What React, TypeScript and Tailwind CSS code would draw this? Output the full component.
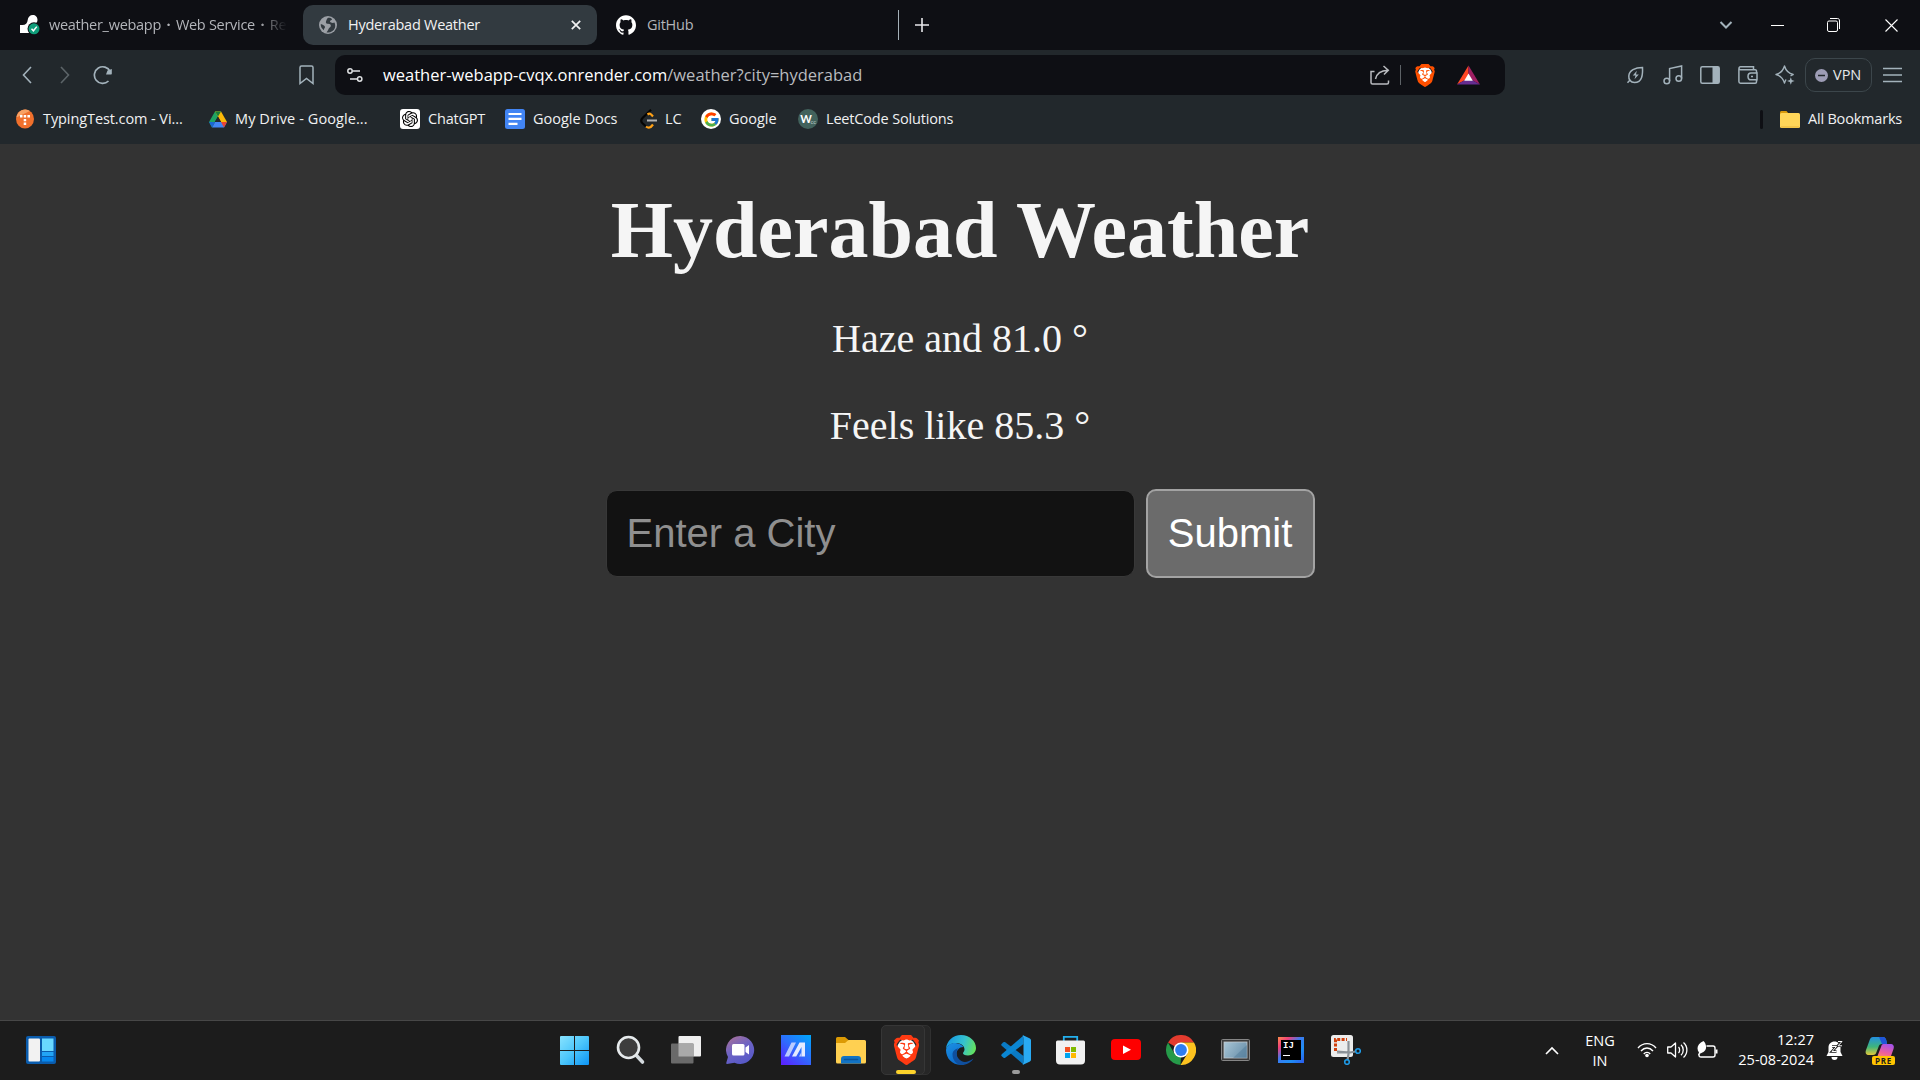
import type { ReactNode } from "react";
import { SiBrave, SiOpenai, SiGithub } from "react-icons/si";
import { FcGoogle } from "react-icons/fc";

function Svg({ w, h, vb, children, className }: { w: number; h: number; vb?: string; children: ReactNode; className?: string }) {
  return (
    <svg width={w} height={h} viewBox={vb ?? `0 0 ${w} ${h}`} fill="none" className={`block shrink-0 ${className ?? ""}`}>
      {children}
    </svg>
  );
}

/* ---------- Tab strip ---------- */

function RenderIcon() {
  return (
    <Svg w={20} h={20}>
      <path d="M0 18V10H2.500C5.500 10 7.500 8 7.700 5C8 2 10 0 12.800 0C15.500 0 17.500 2 17.500 5C17.500 7.500 15.500 9.200 13.500 9.500L9 12V18Z" fill="#fff" />
      <circle cx="14" cy="13.800" r="6.500" fill="#0e0f14" />
      <circle cx="14" cy="13.800" r="5.500" fill="#0f9d7a" />
      <path d="M11.500 13.800L13.400 15.800L16.800 11.600" stroke="#fff" strokeWidth="1.500" />
    </Svg>
  );
}

function GlobeIcon() {
  return (
    <Svg w={18} h={18}>
      <circle cx="9" cy="9" r="9" fill="#9b9fa5" />
      <path d="M9 1.800C7.500 3 7.500 4.500 7 5.500C6.500 7 7.500 7.800 9 7.800C11 7.800 12 8.500 11.800 10C11.500 11.500 10 11.800 9.500 13C9 14.200 8.500 15.500 7.500 16.200C10.500 17 14.500 15.500 15.900 12C16.500 10 16.200 8 15.500 6.500C14.500 7 13 7 12 6.500C10.500 6 10.800 4.500 12 4.200C12.800 4 13 3.500 13 3C12 2 10.500 1.600 9 1.800Z" fill="#323a40" />
      <path d="M1.800 8C3.500 8.500 6 9.500 6 11C6 12 5 12.500 4.800 14.200C2.800 12.500 1.500 10.500 1.800 8Z" fill="#323a40" />
    </Svg>
  );
}

function TabStrip() {
  return (
    <div className="flex h-[50px] items-center bg-[#0e0f14] text-[14.5px]">
      <div className="flex h-10 w-[303px] items-center pl-5">
        <RenderIcon />
        <span className="ml-[9px] w-[238px] overflow-hidden whitespace-nowrap tracking-[-0.28px] text-[#b3b5ba] [mask-image:linear-gradient(to_right,black_88%,transparent)]">
          weather_webapp <span className="mx-[2px] font-bold">·</span> Web Service <span className="mx-[2px] font-bold">·</span> Re
        </span>
      </div>
      <div className="flex h-10 w-[294px] items-center rounded-[10px] bg-[#323a40] pl-4 pr-4">
        <GlobeIcon />
        <span className="ml-[11px] flex-1 whitespace-nowrap tracking-[-0.25px] text-[#f1f1f2]">Hyderabad Weather</span>
        <Svg w={10} h={10}>
          <path d="M0.800 0.800L9.200 9.200M9.200 0.800L0.800 9.200" stroke="#f1f1f2" strokeWidth="1.700" />
        </Svg>
      </div>
      <div className="flex h-10 w-[300px] items-center pl-[19px]">
        <SiGithub className="size-5 text-white" />
        <span className="ml-[11px] tracking-[-0.25px] text-[#b3b5ba]">GitHub</span>
      </div>
      <div className="ml-px h-[30px] w-px bg-[#a5b0b8]" />
      <Svg w={14} h={14} className="ml-[16px]">
        <path d="M7 0V14M0 7H14" stroke="#e8e8ea" strokeWidth="1.600" />
      </Svg>
      <div className="ml-auto flex items-center pr-[22px] text-white">
        <Svg w={14} h={8}>
          <path d="M1.500 1L7 6.500L12.500 1" stroke="#a3b2bb" strokeWidth="2" />
        </Svg>
        <Svg w={13} h={13} className="ml-[38px]">
          <path d="M0 6.500H13" stroke="#fff" />
        </Svg>
        <Svg w={14} h={14} className="ml-[43px]">
          <rect x="0.500" y="3" width="10" height="10.500" rx="1.500" stroke="#fff" />
          <path d="M3 0.500H10.500C12 0.500 12.500 1.500 12.500 3V11" stroke="#fff" />
        </Svg>
        <Svg w={13} h={13} className="ml-[44px]">
          <path d="M0.500 0.500L12.500 12.500M12.500 0.500L0.500 12.500" stroke="#fff" strokeWidth="1.100" />
        </Svg>
      </div>
    </div>
  );
}

/* ---------- Address bar ---------- */

function BraveLion({ w, h, dark }: { w: number; h: number; dark?: boolean }) {
  return (
    <Svg w={w} h={h} vb="2 0 20 24">
      <ellipse cx="12" cy="11" rx="7.500" ry="8" fill="#fff" />
      <SiBrave size={24} className={dark ? "text-[#ff3a12]" : "text-[#ff5000]"} />
    </Svg>
  );
}

function BatTriangle() {
  return (
    <Svg w={23} h={20} vb="0 0 24 20">
      <path d="M12 0L0 20L12 13Z" fill="#ff4724" />
      <path d="M12 0L24 20L12 13Z" fill="#9e1f63" />
      <path d="M0 20H24L12 13Z" fill="#662d91" />
      <path d="M12 8.500L16.500 16H7.500Z" fill="#fff" />
    </Svg>
  );
}

function Toolbar() {
  return (
    <div className="flex h-[50px] items-center bg-[#22282c]">
      <div className="flex w-[335px] items-center pl-[22px]">
        <Svg w={10} h={18}>
          <path d="M9 1L1.500 9L9 17" stroke="#a3b2bb" strokeWidth="1.600" />
        </Svg>
        <Svg w={10} h={18} className="ml-7">
          <path d="M1 1L8.500 9L1 17" stroke="#5c6468" strokeWidth="1.600" />
        </Svg>
        <Svg w={20} h={20} className="ml-[23px]">
          <path d="M15.500 16A8.300 8.300 0 1 1 17.200 6.500" stroke="#a3b2bb" strokeWidth="1.700" />
          <path d="M13 9.600L14.500 5.500L18.800 4V8.600C18.800 9.300 18.500 9.600 17.800 9.600Z" fill="#a3b2bb" />
        </Svg>
        <Svg w={15} h={20} className="ml-[186px]">
          <path d="M1 2.500C1 1.500 1.500 1 2.500 1H12.500C13.500 1 14 1.500 14 2.500V18.500L7.500 13.500L1 18.500Z" stroke="#a3b2bb" strokeWidth="1.500" />
        </Svg>
      </div>
      <div className="flex h-10 w-[1170px] items-center rounded-[10px] bg-[#0e0f14] pl-3 pr-[25px]">
        <Svg w={16} h={16}>
          <circle cx="3" cy="4" r="2.200" stroke="#dfe1e3" strokeWidth="1.500" />
          <path d="M5.500 4H13M3 12H10" stroke="#dfe1e3" strokeWidth="1.500" />
          <circle cx="12.700" cy="12" r="2.200" stroke="#dfe1e3" strokeWidth="1.500" />
        </Svg>
        <span className="ml-5 whitespace-nowrap text-[16.5px] text-[#b9bbbf]">
          <span className="text-white">weather-webapp-cvqx.onrender.com</span>/weather?city=hyderabad
        </span>
        <div className="ml-auto flex items-center">
          <Svg w={20} h={20}>
            <path d="M4.500 6.500H1V17.500C1 18.500 1.500 19 2.500 19H17C18 19 18.500 18.500 18.500 17.500V15.500" stroke="#b9bbbf" strokeWidth="1.500" />
            <path d="M5.500 14C6.500 9 9.500 5.500 18 5.200M13.500 1L18.300 5.200L14 9.500" stroke="#b9bbbf" strokeWidth="1.500" />
          </Svg>
          <div className="ml-[10px] h-5 w-px bg-[#5d6266]" />
          <div className="ml-[14px]"><BraveLion w={20} h={23} /></div>
          <div className="ml-[22px]"><BatTriangle /></div>
        </div>
      </div>
      <div className="flex flex-1 items-center justify-end pr-[18px]">
        <Svg w={18} h={18}>
          <path d="M16.500 1.500C16.800 8 16.500 16.500 8.500 16.500C4.500 16.500 2.500 13.500 2.800 10C3.200 4.500 9 1.500 16.500 1.500ZM1.500 16.800L4.500 13.500" stroke="#a3b2bb" strokeWidth="1.500" />
          <path d="M10.800 4.800L6.800 9.500H9.500L8.500 13.200L12.800 8.400H10Z" fill="#a3b2bb" />
        </Svg>
        <Svg w={20} h={20} className="ml-[19px]">
          <circle cx="3.800" cy="16" r="2.800" stroke="#a3b2bb" strokeWidth="1.500" />
          <circle cx="15.800" cy="13.500" r="2.800" stroke="#a3b2bb" strokeWidth="1.500" />
          <path d="M6.600 16V3.500L18.600 1V13.500" stroke="#a3b2bb" strokeWidth="1.500" />
        </Svg>
        <Svg w={20} h={18} className="ml-[17px]">
          <rect x="0.800" y="0.800" width="18.400" height="16.400" rx="1.500" stroke="#a3b2bb" strokeWidth="1.500" />
          <path d="M12.500 1H19V17H12.500Z" fill="#a3b2bb" />
        </Svg>
        <Svg w={20} h={18} className="ml-[18px]">
          <path d="M18.500 7V5C18.500 4.200 18 3.800 17.200 3.800H2.500C0.500 3.800 0.500 0.800 2.500 0.800H15.500V3.500M0.900 2.500V15.500C0.900 16.500 1.500 17.200 2.500 17.200H17.200C18 17.200 18.500 16.700 18.500 16V14" stroke="#a3b2bb" strokeWidth="1.500" />
          <path d="M19 7H13C11 7 10 8.500 10 10.400C10 12.300 11 13.800 13 13.800H19Z" stroke="#a3b2bb" strokeWidth="1.500" />
          <path d="M13 10.400H15" stroke="#a3b2bb" strokeWidth="1.500" />
        </Svg>
        <Svg w={20} h={20} className="ml-[17px]">
          <path d="M15.500 11C17 10 17.500 9.800 18.200 9.500C13 8.300 11 6 9.500 1C8 6 6 8.300 1 9.500C6 10.700 8 13 9.500 18C10 16.500 10.500 15.500 11 14.500" stroke="#a3b2bb" strokeWidth="1.400" strokeLinejoin="round" />
          <path d="M15.800 12.200L16.800 15L19.600 16L16.800 17L15.800 19.800L14.800 17L12 16L14.800 15Z" fill="#a3b2bb" />
        </Svg>
        <div className="ml-[10px] flex h-[34px] w-[67px] items-center rounded-[10px] border border-[#3c464b] pl-[9px] text-[14.5px] text-[#e6e8ea]">
          <Svg w={13} h={13}>
            <circle cx="6.500" cy="6.500" r="6.500" fill="#9d9cb5" />
            <path d="M3 6.500H10" stroke="#22282c" strokeWidth="1.500" />
          </Svg>
          <span className="ml-[5px]">VPN</span>
        </div>
        <Svg w={19} h={16} className="ml-[11px]">
          <path d="M0 1.500H19M0 8H19M0 14.500H19" stroke="#a3b2bb" strokeWidth="1.500" />
        </Svg>
      </div>
    </div>
  );
}

/* ---------- Bookmarks ---------- */

function Bookmark({ icon, label, className }: { icon: ReactNode; label: string; className: string }) {
  return (
    <div className={`flex shrink-0 items-center whitespace-nowrap ${className}`}>
      {icon}
      <span>{label}</span>
    </div>
  );
}

function BookmarksBar() {
  return (
    <div className="flex h-11 items-center bg-[#22282c] pb-[6px] pl-4 pr-[18px] text-[14.5px] text-[#f0f1f2]">
      <Bookmark
        className="w-[193px] gap-[9px] tracking-[-0.09px]"
        label="TypingTest.com - Vi..."
        icon={
          <Svg w={18} h={20}>
            <ellipse cx="9" cy="10" rx="9" ry="9.500" fill="#f0702c" />
            <path d="M0.300 8.500A9 9.500 0 0 1 14 2Z" fill="#f8a265" />
            <path d="M4 6H6.500V8.500H4ZM7.700 6H10.200V8.500H7.700ZM11.400 6H14V8.500H11.400ZM7.700 10H10.200V12.200H7.700ZM7.700 13.600H10.200V16H7.700Z" fill="#fff" />
          </Svg>
        }
      />
      <Bookmark
        className="w-[191px] gap-2 tracking-[0.09px]"
        label="My Drive - Google..."
        icon={
          <Svg w={18} h={17} vb="0 0 18 16">
            <path d="M6 0H12L6.300 9.500L3 16L0 10.500Z" fill="#1fa463" />
            <path d="M6 0H12L18 10.500H12Z" fill="#fcb908" />
            <path d="M6 0H12L9 5Z" fill="#188038" />
            <path d="M6 10.500H18L15 16H3Z" fill="#4285f4" />
            <path d="M12 10.500H18L15 16Z" fill="#ea4335" />
            <path d="M3 16L6 10.500H0Z" fill="#1967d2" />
            <path d="M9 5L12.100 10.500H5.900Z" fill="#22282c" />
          </Svg>
        }
      />
      <Bookmark
        className="w-[105px] gap-2 tracking-[-0.2px]"
        label="ChatGPT"
        icon={
          <div className="flex size-5 items-center justify-center rounded-[3px] bg-white">
            <SiOpenai className="size-4 text-black" />
          </div>
        }
      />
      <Bookmark
        className="w-[135px] gap-2"
        label="Google Docs"
        icon={
          <Svg w={20} h={20}>
            <rect width="20" height="20" rx="2.500" fill="#4285f4" />
            <path d="M3.500 5H16.500M3.500 9.800H16.500M3.500 14.800H12.500" stroke="#fff" strokeWidth="2.200" />
          </Svg>
        }
      />
      <Bookmark
        className="w-[61px] gap-2"
        label="LC"
        icon={
          <Svg w={17} h={20}>
            <path d="M11 0.800L2.500 9C0.800 10.800 0.800 12.500 2.500 14.200L6 17.500" stroke="#050505" strokeWidth="2.200" />
            <path d="M7.500 5.500C9.500 4 10.500 4.500 13 7.500M6 17.500C8.500 19.500 10.500 19 13 15.500" stroke="#ffa116" strokeWidth="2.200" />
            <path d="M7 11.500H17" stroke="#b3b3b3" strokeWidth="2" />
          </Svg>
        }
      />
      <Bookmark
        className="w-[97px] gap-2"
        label="Google"
        icon={
          <div className="flex size-5 items-center justify-center rounded-full bg-white">
            <FcGoogle className="size-[17px]" />
          </div>
        }
      />
      <Bookmark
        className="w-[160px] gap-2 tracking-[-0.17px]"
        label="LeetCode Solutions"
        icon={
          <div className="flex size-5 items-center justify-center rounded-full bg-[#42625c] font-['Lato'] text-[11px] font-bold text-white">
            W<span className="-ml-px mt-1 text-[6px] font-normal text-[#b8c8c4]">cc</span>
          </div>
        }
      />
      <div className="ml-auto flex items-center">
        <div className="h-[19px] w-[3px] rounded-full bg-[#0e0f14]" />
        <Svg w={20} h={17} className="ml-[17px]">
          <path d="M0 1.500C0 0.600 0.600 0 1.500 0H6.500L8.500 2.500V6H0Z" fill="#d99a0b" />
          <rect y="2" width="20" height="15" rx="1.500" fill="#ffd659" />
          <path d="M1 16H19" stroke="#e8b53a" />
        </Svg>
        <span className="ml-2 w-[94px] whitespace-nowrap tracking-[-0.2px]">All Bookmarks</span>
      </div>
    </div>
  );
}

/* ---------- Page ---------- */

function WeatherPage() {
  return (
    <main className="flex h-[876px] flex-col items-center bg-[#333333] pt-[41px] font-['Liberation_Serif',serif] text-[#f5f5f5]">
      <h1 className="whitespace-nowrap text-[80px] font-bold leading-[90px]">Hyderabad Weather</h1>
      <p className="mt-[41px] text-[40px] leading-[46px]">Haze and 81.0 °</p>
      <p className="mt-[41px] text-[40px] leading-[46px]">Feels like 85.3 °</p>
      <form className="mt-[40px] flex items-center gap-[11px] font-['Liberation_Sans',sans-serif]">
        <input
          placeholder="Enter a City"
          className="h-[87px] w-[529px] rounded-[11px] border border-[#383838] bg-[#121212] px-[20px] text-[40px] placeholder:text-[#8f8f8f]"
        />
        <button type="button" className="h-[89px] w-[169px] rounded-[10px] border-2 border-[#a3a3a3] bg-[#6b6b6b] pb-[2px] text-[40px] text-white">
          Submit
        </button>
      </form>
    </main>
  );
}

/* ---------- Taskbar ---------- */

function WidgetsIcon() {
  return (
    <Svg w={30} h={28}>
      <rect width="30" height="28" rx="2" fill="#0a5cad" />
      <rect x="2.500" y="2.500" width="11.500" height="23" rx="1" fill="#f2f2f2" />
      <path d="M16 2.500H27.500V15H16Z" fill="#69d8ff" />
      <path d="M16 16H27.500V20H16Z" fill="#22a5f5" />
      <path d="M16 21H27.500V25.500H16Z" fill="#0788ee" />
    </Svg>
  );
}

function StartIcon() {
  return (
    <Svg w={30} h={30} className="-ml-px">
      <defs>
        <linearGradient id="start" x1="0" y1="0" x2="30" y2="30" gradientUnits="userSpaceOnUse">
          <stop stopColor="#8ae4ff" />
          <stop offset="0.500" stopColor="#4cc6fb" />
          <stop offset="1" stopColor="#0a92f5" />
        </linearGradient>
      </defs>
      <path d="M0 2A1 1 0 0 1 1 1H14V15H0ZM15 1H28A1 1 0 0 1 29 2V15H15ZM0 16H14V30H1A1 1 0 0 1 0 29ZM15 16H29V29A1 1 0 0 1 28 30H15Z" fill="url(#start)" />
    </Svg>
  );
}

function SearchIcon() {
  return (
    <Svg w={30} h={30}>
      <path d="M20 20L26.500 27" stroke="#d4dade" strokeWidth="3.600" strokeLinecap="round" />
      <circle cx="12.500" cy="12.500" r="10.500" fill="#3d3d3d" stroke="#e6eaec" strokeWidth="2.600" />
    </Svg>
  );
}

function TaskViewIcon() {
  return (
    <Svg w={30} h={30}>
      <rect x="7.500" y="1" width="22.500" height="20.500" rx="1" fill="#efefef" />
      <rect x="0" y="8.500" width="22.500" height="20" rx="1" fill="#6a6a6a" />
      <rect x="7.500" y="8.500" width="15" height="13" fill="#a9a9a9" />
    </Svg>
  );
}

function ChatIcon() {
  return (
    <Svg w={30} h={30}>
      <defs>
        <linearGradient id="chat" x1="5" y1="2" x2="20" y2="29" gradientUnits="userSpaceOnUse">
          <stop stopColor="#a36f9c" />
          <stop offset="0.450" stopColor="#6d63c4" />
          <stop offset="1" stopColor="#5558c8" />
        </linearGradient>
      </defs>
      <path d="M14.500 1A14 14 0 1 1 8.500 27.800L1 29C0 29 0.200 28 0.500 27L2 22A14 14 0 0 1 14.500 1Z" fill="url(#chat)" />
      <rect x="6" y="9" width="12.500" height="11.500" rx="1.500" fill="#fff" />
      <path d="M19.500 12.500L23 10V19.500L19.500 17Z" fill="#fff" />
    </Svg>
  );
}

function AsusIcon() {
  return (
    <Svg w={30} h={30}>
      <defs>
        <linearGradient id="asus" x1="3" y1="30" x2="27" y2="0" gradientUnits="userSpaceOnUse">
          <stop stopColor="#5a22ff" />
          <stop offset="0.500" stopColor="#2f6bfd" />
          <stop offset="1" stopColor="#02a3fb" />
        </linearGradient>
      </defs>
      <rect width="30" height="30" fill="url(#asus)" />
      <path d="M3.500 21.500L10.500 7.500H15L8 21.500Z" fill="#b9cbff" />
      <path d="M11 21.500L18.500 7.500H24V21.500H20.500V12L15.200 21.500Z" fill="#e4ebff" />
      <path d="M18 21.500H20.500V17Z" fill="#b9cbff" />
    </Svg>
  );
}

function ExplorerIcon() {
  return (
    <Svg w={30} h={30}>
      <path d="M0 3.500A1.500 1.500 0 0 1 1.500 2H9L12.500 5V10H0Z" fill="#dc9a04" />
      <path d="M0 8H9L12.500 5H28.500A1.500 1.500 0 0 1 30 6.500V27A1.500 1.500 0 0 1 28.500 28.500H1.500A1.500 1.500 0 0 1 0 27Z" fill="#ffd051" />
      <path d="M5 28.500V24A3 3 0 0 1 8 21H22A3 3 0 0 1 25 24V28.500Z" fill="#1273c4" />
      <path d="M8.500 24.500H21.500" stroke="#0b549c" strokeWidth="1.500" strokeLinecap="round" />
    </Svg>
  );
}

function EdgeIcon() {
  return (
    <Svg w={30} h={30}>
      <defs>
        <linearGradient id="edgeTop" x1="4" y1="6" x2="30" y2="14" gradientUnits="userSpaceOnUse">
          <stop stopColor="#1a9fe0" />
          <stop offset="0.500" stopColor="#35c1cf" />
          <stop offset="1" stopColor="#67e455" />
        </linearGradient>
        <linearGradient id="edgeLeft" x1="2" y1="8" x2="14" y2="30" gradientUnits="userSpaceOnUse">
          <stop stopColor="#1b8fe2" />
          <stop offset="1" stopColor="#0a66c8" />
        </linearGradient>
      </defs>
      <path d="M0 14C0.500 6 7 0 15 0C23.500 0 30 6 30 13C30 17.500 26.500 20.500 22 20.500C18.500 20.500 17 19.300 17 18.200C17 17.300 18.500 16.500 18.500 14.500C18.500 10.500 14.500 8 10 8C5 8 1.500 10.500 0 14Z" fill="url(#edgeTop)" />
      <path d="M0 15C0.500 10.500 5 7.800 9.500 8C13 8.200 16 9.800 17.500 12C13 12 10.500 15.500 10.500 18.500C10.500 24 14 28 18 29.500C8 31.500 0 24.500 0 15Z" fill="url(#edgeLeft)" />
      <path d="M12.500 13.500C10 15.500 9.800 20 12.500 23.500C16 28 21 28.200 27.500 23.500C25 27.500 20.500 30 15.500 30C10.500 29.500 6.500 25 6.500 19.500C6.500 16 9.500 13.500 12.500 13.500Z" fill="#0f4f9e" />
    </Svg>
  );
}

function VsCodeIcon() {
  return (
    <Svg w={30} h={30}>
      <path d="M0.500 9L2.500 7.200C3 6.800 3.600 6.800 4.200 7.200L22.500 21V29.500L1 11C0.200 10.300 0 9.600 0.500 9Z" fill="#0a7ac4" />
      <path d="M0.500 21L2.500 22.800C3 23.200 3.600 23.200 4.200 22.800L22.500 9V0.500L1 19C0.200 19.700 0 20.400 0.500 21Z" fill="#0b86d2" />
      <path d="M22 0.200L28.500 3.200C29.500 3.700 30 4.500 30 5.500V24.500C30 25.500 29.500 26.300 28.500 26.800L22 29.800C21 29.800 22.500 28.500 22.500 27V3C22.500 1.500 21 0.500 22 0.200Z" fill="#29aaf3" />
    </Svg>
  );
}

function StoreIcon() {
  return (
    <Svg w={30} h={30}>
      <path d="M7.800 6V1.800H21.200V6" stroke="#23b0ee" strokeWidth="1.800" />
      <path d="M0 7A1.500 1.500 0 0 1 1.500 5.500H27.500A1.500 1.500 0 0 1 29 7V25.500A4 4 0 0 1 25 29.500H4A4 4 0 0 1 0 25.500Z" fill="#f1f1f1" />
      <path d="M9 12H14V17H9Z" fill="#f25022" />
      <path d="M15 12H20V17H15Z" fill="#7fba00" />
      <path d="M9 18H14V23H9Z" fill="#00a4ef" />
      <path d="M15 18H20V23H15Z" fill="#ffb900" />
    </Svg>
  );
}

function YouTubeIcon() {
  return (
    <Svg w={30} h={30}>
      <rect y="4" width="30" height="21" rx="4" fill="#fe0000" />
      <path d="M12 10.500L20 14.700L12 19Z" fill="#fff" />
    </Svg>
  );
}

function ChromeIcon() {
  return (
    <Svg w={30} h={30}>
      <path d="M15 15L2 7.500A15 15 0 0 1 28 7.500H15Z" fill="#e33b2e" />
      <path d="M2 7.500L8.500 18.800L15 22L14.500 30A15 15 0 0 1 2 7.500Z" fill="#259a49" />
      <path d="M28 7.500A15 15 0 0 1 14.500 30L21.500 18.500L15 7.500Z" fill="#fcc21f" />
      <circle cx="15" cy="15" r="7.500" fill="#fff" />
      <circle cx="15" cy="15" r="5.900" fill="#2f7df0" />
    </Svg>
  );
}

function ScreenIcon() {
  return (
    <Svg w={30} h={30}>
      <defs>
        <linearGradient id="screen" x1="3" y1="7" x2="27" y2="24" gradientUnits="userSpaceOnUse">
          <stop stopColor="#a9c6d6" />
          <stop offset="1" stopColor="#5f87a3" />
        </linearGradient>
      </defs>
      <rect x="0.500" y="4.500" width="28" height="21" rx="1" fill="#3c3c3c" stroke="#858585" />
      <rect x="3" y="7" width="23" height="16" fill="url(#screen)" stroke="#c3c9cc" strokeWidth="0.800" />
      <path d="M26 10L12 23H26Z" fill="#527b9a" opacity="0.500" />
    </Svg>
  );
}

function IdeaIcon() {
  return (
    <div className="flex size-[30px] items-center justify-center">
      <div className="flex size-[26px] items-center justify-center bg-[linear-gradient(135deg,#fe8a4a_0%,#f0407a_22%,#3a7bf0_45%,#1f8ff5_70%,#2b5bf0_100%)]">
        <div className="flex size-5 flex-col bg-black pl-[2px] pt-[2px] font-['Liberation_Mono',monospace] text-[9px] font-bold leading-[8px] text-white">
          IJ
          <div className="mt-[5px] h-px w-[7px] bg-white" />
        </div>
      </div>
    </div>
  );
}

function SnipIcon() {
  return (
    <Svg w={30} h={30}>
      <rect width="22" height="22" rx="2.500" fill="#ececec" />
      <path d="M4.500 16V4.500H16" stroke="#d13f0b" strokeWidth="3" strokeDasharray="3 1.400" />
      <path d="M17.500 6V17.500M6 17.500H17.500M17.500 6V19L16.500 25M6 16.500L19 17.500L24.500 16.500" stroke="#8b9197" strokeWidth="2.200" />
      <circle cx="16" cy="27" r="2.300" stroke="#1e9be8" strokeWidth="1.600" />
      <circle cx="27" cy="16" r="2.300" stroke="#1e9be8" strokeWidth="1.600" />
    </Svg>
  );
}

function Taskbar() {
  return (
    <div className="flex h-[60px] items-center border-t border-[#474747] bg-[#1c1c1c] pb-px">
      <div className="w-[561px] pl-[26px]"><WidgetsIcon /></div>
      <div className="flex items-center gap-[25px]">
        <div className="flex w-[30px]"><StartIcon /></div>
        <SearchIcon />
        <TaskViewIcon />
        <ChatIcon />
        <AsusIcon />
        <ExplorerIcon />
        <div className="relative flex h-[30px] w-[30px] items-center justify-center">
          <div className="absolute -left-[6px] -top-[10px] h-[50px] w-[46px] rounded-[5px] border border-[#303030] bg-[#262626]" />
          <div className="absolute -left-[10px] -top-[10px] h-[50px] w-[44px] rounded-[5px] border border-[#363636] bg-[#2a2a2a]" />
          <div className="relative"><BraveLion w={25} h={30} dark /></div>
          <div className="absolute left-[5px] top-[35px] h-1 w-5 rounded-full bg-[#fdd32b]" />
        </div>
        <EdgeIcon />
        <div className="relative">
          <VsCodeIcon />
          <div className="absolute left-[11px] top-[35px] h-1 w-2 rounded-full bg-[#9a9a9a]" />
        </div>
        <StoreIcon />
        <YouTubeIcon />
        <ChromeIcon />
        <ScreenIcon />
        <IdeaIcon />
        <SnipIcon />
      </div>
      <div className="ml-auto flex items-center pr-[25px] text-[14.5px] text-white">
        <Svg w={14} h={9}>
          <path d="M1 8L7 2L13 8" stroke="#fff" strokeWidth="1.600" />
        </Svg>
        <div className="ml-[20px] w-[42px] pt-[2px] text-center leading-5"><div>ENG</div><div>IN</div></div>
        <Svg w={20} h={16} className="ml-[16px]">
          <path d="M1 6C6 0.200 14 0.200 19 6M4 9C7.500 5 12.500 5 16 9M6.800 12C8.500 9.800 11.500 9.800 13.200 12" stroke="#fff" strokeWidth="1.400" />
          <circle cx="10" cy="13.500" r="1.800" fill="#fff" />
        </Svg>
        <Svg w={21} h={18} className="ml-[10px]">
          <path d="M0.700 6H4L8.500 2V16L4 12H0.700Z" stroke="#fff" strokeWidth="1.300" strokeLinejoin="round" />
          <path d="M11.500 6C13 7.500 13 10.500 11.500 12M14 3.800C17 6.500 17 11.500 14 14.200M16.500 1.500C21 5.500 21 12.500 16.500 16.500" stroke="#fff" strokeWidth="1.300" />
        </Svg>
        <Svg w={21} h={18} className="ml-[9px]">
          <path d="M9.500 5H16C17.300 5 18 5.700 18 7V14C18 15.300 17.300 16 16 16H4C2.700 16 2 15.300 2 14V13" stroke="#fff" strokeWidth="1.400" />
          <path d="M18.500 8.500H20.500V12.500H18.500Z" fill="#fff" />
          <path d="M6.500 0C9.500 3 10 7.500 7.500 10C5.500 12 3.500 11.500 1.500 14.500C1 13.500 1.500 12.500 2 11.500C-1 7.500 0.500 2.500 6.500 0Z" fill="#fff" />
        </Svg>
        <div className="ml-[18px] w-[78px] text-right leading-5"><div>12:27</div><div className="whitespace-nowrap">25-08-2024</div></div>
        <Svg w={18} h={20} className="ml-[12px]">
          <path d="M0.500 16L2.500 12V7.500C2.500 4 5 1.500 8.500 1.500C12 1.500 14.500 4 14.500 7.500V12L16.500 16Z" fill="#fff" />
          <path d="M5.500 17H11.500A3 3 0 0 1 5.500 17Z" fill="#fff" />
          <path d="M6 6.500H10.500L6 11.500H10.500M12 1.500H16L12 5.800H16" stroke="#1c1c1c" strokeWidth="2.600" />
          <path d="M6 6.500H10.500L6 11.500H10.500M12 1.500H16L12 5.800H16" stroke="#fff" strokeWidth="1" />
        </Svg>
        <div className="relative ml-[21px] size-[30px]">
          <Svg w={30} h={30}>
            <defs>
              <linearGradient id="copA" x1="8" y1="2" x2="8" y2="20" gradientUnits="userSpaceOnUse">
                <stop stopColor="#2390e0" />
                <stop offset="0.550" stopColor="#3fb57a" />
                <stop offset="1" stopColor="#e3c83a" />
              </linearGradient>
              <linearGradient id="copB" x1="22" y1="9" x2="18" y2="24" gradientUnits="userSpaceOnUse">
                <stop stopColor="#a653e8" />
                <stop offset="0.600" stopColor="#ee5f9a" />
                <stop offset="1" stopColor="#f9925c" />
              </linearGradient>
            </defs>
            <path d="M8 2H18C20 2 21 4 21.500 6L22 9H17C15 9 14 10 13.500 12L11.500 17C11 19 10 20 8 20H4C1 20 0 18 1 15L4.500 5.500C5.200 3.200 6 2 8 2Z" fill="url(#copA)" />
            <path d="M14 2H18C20 2 21 4 21.500 6L22 9H17Z" fill="#1f55d8" />
            <path d="M18.500 9H25C28.500 9 29.500 11 28.500 14L26 21H12.500L16 12C16.500 10 17 9 18.500 9Z" fill="url(#copB)" />
          </Svg>
          <div className="absolute left-[7px] top-[21px] flex h-[9px] w-[23px] items-center justify-center rounded-[2px] bg-[#ffc400] text-[8px] font-bold leading-none tracking-[0.8px] text-[#1c1c1c]">PRE</div>
        </div>
      </div>
    </div>
  );
}

export default function App() {
  return (
    <div className="flex h-[1080px] w-[1920px] flex-col overflow-hidden bg-[#333333] font-['Open_Sans',sans-serif]">
      <TabStrip />
      <Toolbar />
      <BookmarksBar />
      <WeatherPage />
      <Taskbar />
    </div>
  );
}
